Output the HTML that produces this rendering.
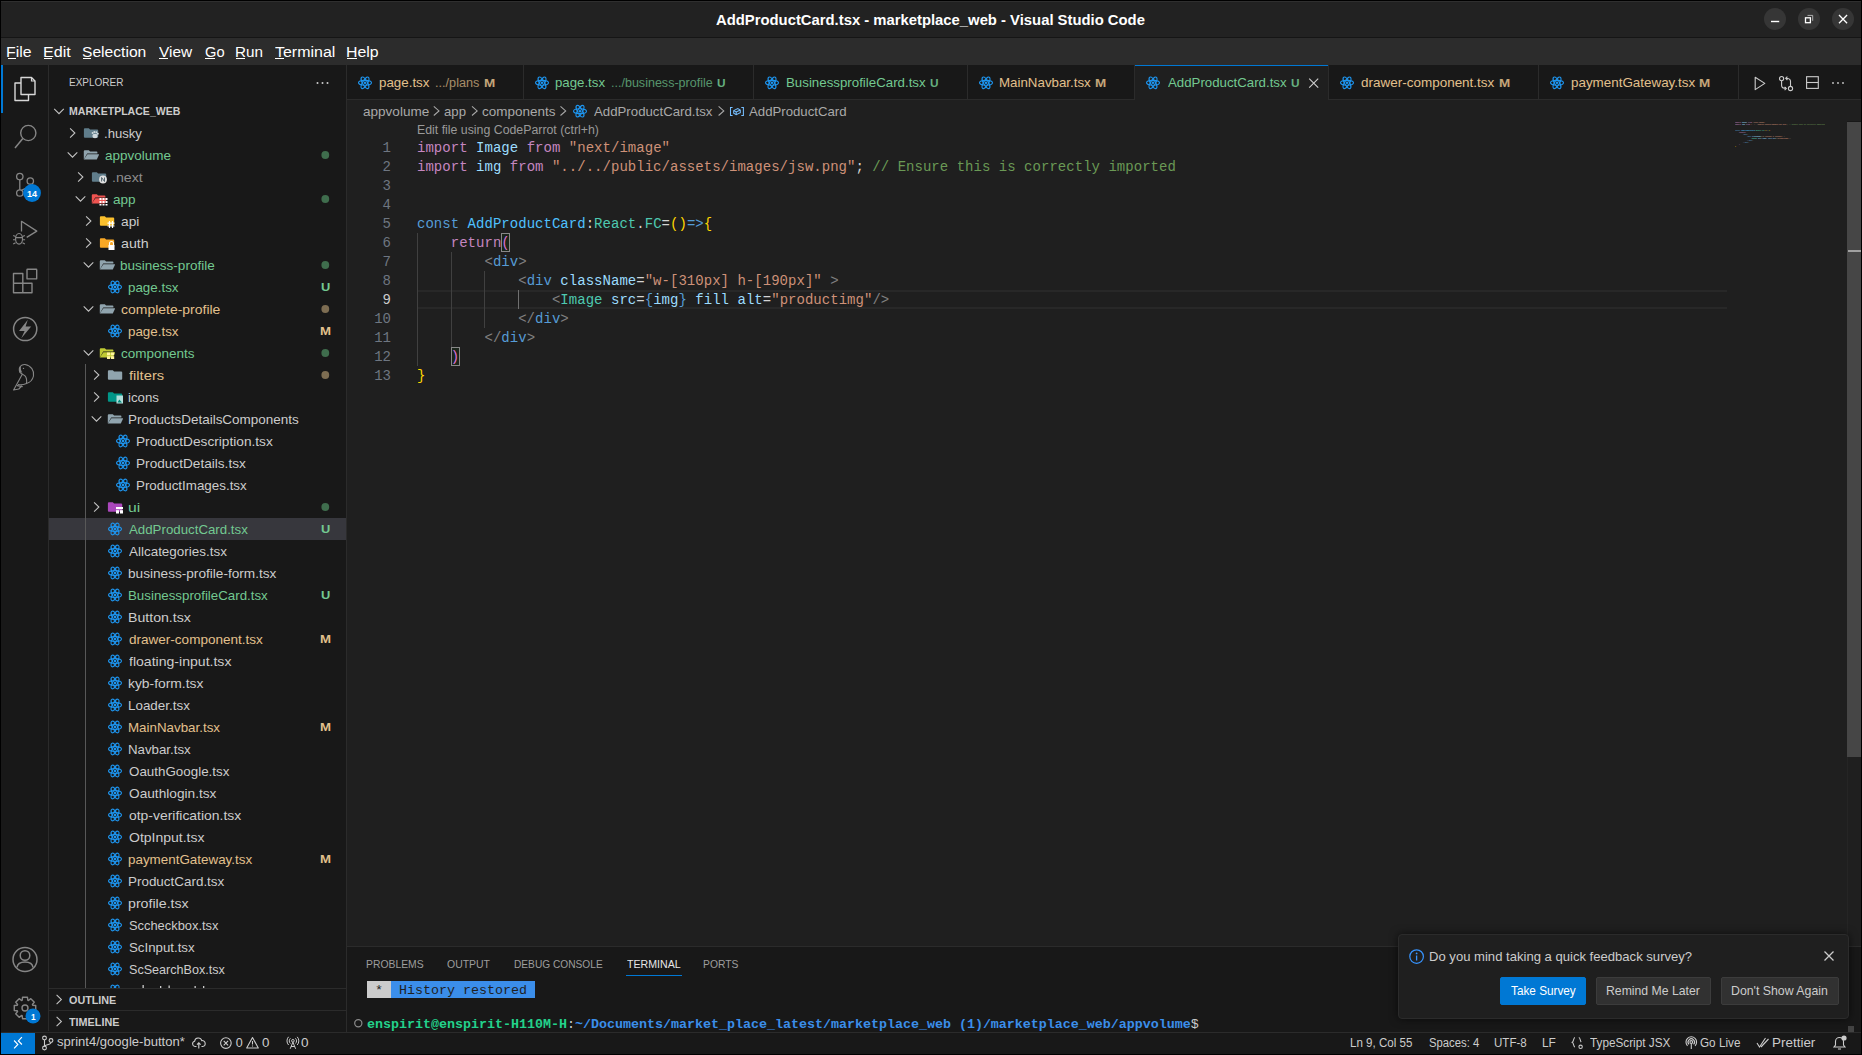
<!DOCTYPE html><html><head><meta charset='utf-8'><style>
*{margin:0;padding:0;box-sizing:border-box}
html,body{width:1862px;height:1055px;overflow:hidden;background:#181818;font-family:"Liberation Sans", sans-serif;color:#cccccc}
.a{position:absolute}
.t{position:absolute;white-space:pre;line-height:1}
svg{position:absolute;overflow:visible}
</style></head><body>
<div class='a' style='left:0;top:0;width:1862px;height:37px;background:#222222'></div>
<div class='a' style='left:0;top:37px;width:1862px;height:1px;background:#151515'></div>
<div class='t' style='left:715.92px;top:13.03px;font-size:14.5px;font-weight:700;font-family:"Liberation Sans", sans-serif;color:#ffffff;transform:scaleX(1.0224);transform-origin:0 0;'>AddProductCard.tsx - marketplace_web - Visual Studio Code</div>
<div class='a' style='left:1764.2px;top:8px;width:22px;height:22px;border-radius:11px;background:#363636'></div>
<div class='a' style='left:1798px;top:8px;width:22px;height:22px;border-radius:11px;background:#363636'></div>
<div class='a' style='left:1832px;top:8px;width:22px;height:22px;border-radius:11px;background:#363636'></div>
<svg style='left:0;top:0' width='1862' height='37'><line x1='1771' y1='21.5' x2='1779.2' y2='21.5' stroke='#fff' stroke-width='1.4'/><rect x='1805.5' y='17.8' width='4.9' height='4.9' fill='none' stroke='#fff' stroke-width='1.3'/><path d='M1807.5 15.4 H1812.7 V20.8' fill='none' stroke='#bbb' stroke-width='0.9'/><path d='M1839 15 L1847.1 23.2 M1847.1 15 L1839 23.2' stroke='#fff' stroke-width='1.3'/></svg>
<div class='a' style='left:0;top:38px;width:1862px;height:27px;background:#2c2c2c'></div>
<div class='t' style='left:6.21px;top:45.62px;font-size:13.8px;font-weight:400;font-family:"Liberation Sans", sans-serif;color:#ffffff;transform:scaleX(1.1463);transform-origin:0 0;'>File</div>
<div class='a' style='left:7.5px;top:58px;width:8px;height:1px;background:#ffffff'></div>
<div class='t' style='left:43.09px;top:45.62px;font-size:13.8px;font-weight:400;font-family:"Liberation Sans", sans-serif;color:#ffffff;transform:scaleX(1.1689);transform-origin:0 0;'>Edit</div>
<div class='a' style='left:44.4px;top:58px;width:8px;height:1px;background:#ffffff'></div>
<div class='t' style='left:82.49px;top:45.62px;font-size:13.8px;font-weight:400;font-family:"Liberation Sans", sans-serif;color:#ffffff;transform:scaleX(1.1330);transform-origin:0 0;'>Selection</div>
<div class='a' style='left:83.2px;top:58px;width:8px;height:1px;background:#ffffff'></div>
<div class='t' style='left:158.86px;top:45.62px;font-size:13.8px;font-weight:400;font-family:"Liberation Sans", sans-serif;color:#ffffff;transform:scaleX(1.1186);transform-origin:0 0;'>View</div>
<div class='a' style='left:159.0px;top:58px;width:9px;height:1px;background:#ffffff'></div>
<div class='t' style='left:204.50px;top:45.62px;font-size:13.8px;font-weight:400;font-family:"Liberation Sans", sans-serif;color:#ffffff;transform:scaleX(1.0647);transform-origin:0 0;'>Go</div>
<div class='a' style='left:205.3px;top:58px;width:10px;height:1px;background:#ffffff'></div>
<div class='t' style='left:235.06px;top:45.62px;font-size:13.8px;font-weight:400;font-family:"Liberation Sans", sans-serif;color:#ffffff;transform:scaleX(1.1054);transform-origin:0 0;'>Run</div>
<div class='a' style='left:236.3px;top:58px;width:9px;height:1px;background:#ffffff'></div>
<div class='t' style='left:274.71px;top:45.62px;font-size:13.8px;font-weight:400;font-family:"Liberation Sans", sans-serif;color:#ffffff;transform:scaleX(1.1569);transform-origin:0 0;'>Terminal</div>
<div class='a' style='left:275.0px;top:58px;width:9px;height:1px;background:#ffffff'></div>
<div class='t' style='left:346.11px;top:45.62px;font-size:13.8px;font-weight:400;font-family:"Liberation Sans", sans-serif;color:#ffffff;transform:scaleX(1.1493);transform-origin:0 0;'>Help</div>
<div class='a' style='left:347.4px;top:58px;width:10px;height:1px;background:#ffffff'></div>
<div class='a' style='left:1px;top:65px;width:47px;height:966px;background:#181818'></div>
<div class='a' style='left:48px;top:65px;width:1px;height:966px;background:#2b2b2b'></div>
<div class='a' style='left:1px;top:65px;width:2px;height:48px;background:#0078d4'></div>
<svg style='left:0;top:0' width='48' height='1031'>
<!-- explorer -->
<path d='M21 77.5 H31.5 L35 81 V94.5 H21 Z' fill='none' stroke='#d7d7d7' stroke-width='1.4' stroke-linejoin='round'/>
<path d='M31.5 77.5 V81 H35' fill='none' stroke='#d7d7d7' stroke-width='1.2'/>
<path d='M21 83 H15 V100.5 H28.5 V94.5' fill='none' stroke='#d7d7d7' stroke-width='1.4' stroke-linejoin='round'/>
<!-- search -->
<circle cx='28.3' cy='133' r='7.6' fill='none' stroke='#868686' stroke-width='1.4'/>
<line x1='22.8' y1='138.5' x2='15' y2='148' stroke='#868686' stroke-width='1.5'/>
<!-- scm -->
<circle cx='19.8' cy='176.6' r='3.2' fill='none' stroke='#868686' stroke-width='1.3'/>
<circle cx='30.3' cy='181' r='3.2' fill='none' stroke='#868686' stroke-width='1.3'/>
<circle cx='19.8' cy='193' r='3.2' fill='none' stroke='#868686' stroke-width='1.3'/>
<line x1='19.8' y1='179.8' x2='19.8' y2='189.8' stroke='#868686' stroke-width='1.3'/>
<path d='M30.3 184.2 C30 189 24 188 21.5 190.5' fill='none' stroke='#868686' stroke-width='1.3'/>
<circle cx='32.05' cy='193' r='8.9' fill='#0078d4'/>
<!-- debug -->
<path d='M21.5 231.6 V221.3 L36.8 231.1 L26.7 237.4' fill='none' stroke='#868686' stroke-width='1.3' stroke-linejoin='round'/>
<ellipse cx='19.05' cy='238.8' rx='3.5' ry='5.3' fill='none' stroke='#868686' stroke-width='1.2'/>
<path d='M15.6 237.6 H22.5 M13.2 235.4 L15.6 236.6 M24.9 235.4 L22.5 236.6 M13 239.8 H15.5 M22.6 239.8 H25.1 M13.2 244.1 L15.6 242.8 M24.9 244.1 L22.5 242.8' fill='none' stroke='#868686' stroke-width='1.1'/>
<!-- extensions -->
<path d='M13.5 273.5 H22.8 V292.7 H13.5 Z M13.5 283.2 H32 V292.7 H22.8' fill='none' stroke='#868686' stroke-width='1.4' stroke-linejoin='round'/>
<rect x='27' y='269.2' width='9.7' height='9.7' fill='none' stroke='#868686' stroke-width='1.4' rx='0.5'/>
<!-- thunder client -->
<circle cx='25.2' cy='329' r='11.6' fill='none' stroke='#868686' stroke-width='1.5'/>
<path d='M27.8 319.8 L19 331 H24.6 L21.3 338.3 L31.2 326.4 H25.6 Z' fill='#868686'/>
<!-- parrot -->
<g fill='none' stroke='#868686' stroke-width='1.1' stroke-linecap='round' stroke-linejoin='round'>
<path d='M19.8 372 C18 367 21.5 364.2 25 364.5 C31 365.3 34.5 371 33.5 376 C32.6 380 29.5 382.6 26.5 383.5 C24 384.5 21 385 18.3 384.5'/>
<path d='M19.8 372 C20.8 374 23.2 374 25 375.8 C26.8 377.8 26.9 380.5 26.5 383.5'/>
<path d='M22.3 374.3 L13.6 390 L18.8 389 L21.6 386'/>
<path d='M17.2 385.6 L22.3 386.6'/>
</g>
<path d='M19.8 372 C18.5 369 19.5 367 21 366 C20.5 368.5 21 370.5 22.3 372.8 Z' fill='#868686'/>
<circle cx='23.5' cy='368.4' r='0.7' fill='#868686'/>
<!-- accounts -->
<circle cx='25' cy='959.5' r='12' fill='none' stroke='#868686' stroke-width='1.5'/>
<circle cx='25' cy='955.5' r='4.8' fill='none' stroke='#868686' stroke-width='1.5'/>
<path d='M17 967.5 C17.5 963 21 962 25 962 C29 962 32.5 963 33 967.5' fill='none' stroke='#868686' stroke-width='1.5'/>
<!-- settings gear -->
<g transform='translate(25 1008)'><path d='M7.71 -2.80 L10.72 -2.47 L10.72 2.47 L7.71 2.80 L7.43 3.47 L9.33 5.83 L5.83 9.33 L3.47 7.43 L2.80 7.71 L2.47 10.72 L-2.47 10.72 L-2.80 7.71 L-3.47 7.43 L-5.83 9.33 L-9.33 5.83 L-7.43 3.47 L-7.71 2.80 L-10.72 2.47 L-10.72 -2.47 L-7.71 -2.80 L-7.43 -3.47 L-9.33 -5.83 L-5.83 -9.33 L-3.47 -7.43 L-2.80 -7.71 L-2.47 -10.72 L2.47 -10.72 L2.80 -7.71 L3.47 -7.43 L5.83 -9.33 L9.33 -5.83 L7.43 -3.47 Z' fill='none' stroke='#868686' stroke-width='1.4' stroke-linejoin='round'/><circle cx='0' cy='0' r='3' fill='none' stroke='#868686' stroke-width='1.4'/></g>
<circle cx='33' cy='1016' r='7.5' fill='#0078d4'/>
</svg>
<div class='t' style='left:26.71px;top:189.26px;font-size:9.5px;font-weight:700;font-family:"Liberation Sans", sans-serif;color:#ffffff;transform:scaleX(0.9519);transform-origin:0 0;'>14</div>
<div class='t' style='left:30.62px;top:1012.68px;font-size:9px;font-weight:700;font-family:"Liberation Sans", sans-serif;color:#ffffff;transform:scaleX(0.9212);transform-origin:0 0;'>1</div>
<div class='a' style='left:346px;top:65px;width:1px;height:967px;background:#2b2b2b'></div>
<div class='t' style='left:68.83px;top:76.65px;font-size:11.4px;font-weight:400;font-family:"Liberation Sans", sans-serif;color:#cccccc;transform:scaleX(0.8775);transform-origin:0 0;'>EXPLORER</div>
<svg style='left:0;top:0' width='346' height='100'><circle cx='317.5' cy='83' r='1' fill='#ccc'/><circle cx='322.5' cy='83' r='1' fill='#ccc'/><circle cx='327.5' cy='83' r='1' fill='#ccc'/></svg>
<div class='a' style='left:49px;top:518px;width:297px;height:22px;background:#37373d'></div>
<div class='a' style='left:85px;top:364px;width:1px;height:624px;background:#585858'></div>
<div class='t' style='left:104.04px;top:127.30px;font-size:13px;font-weight:400;font-family:"Liberation Sans", sans-serif;color:#cccccc;transform:scaleX(1.0097);transform-origin:0 0;'>.husky</div>
<div class='t' style='left:104.78px;top:149.30px;font-size:13px;font-weight:400;font-family:"Liberation Sans", sans-serif;color:#73c991;transform:scaleX(1.0368);transform-origin:0 0;'>appvolume</div>
<div class='t' style='left:111.94px;top:171.30px;font-size:13px;font-weight:400;font-family:"Liberation Sans", sans-serif;color:#8c8c8c;transform:scaleX(1.0902);transform-origin:0 0;'>.next</div>
<div class='t' style='left:112.78px;top:193.30px;font-size:13px;font-weight:400;font-family:"Liberation Sans", sans-serif;color:#73c991;transform:scaleX(1.0424);transform-origin:0 0;'>app</div>
<div class='t' style='left:120.77px;top:215.30px;font-size:13px;font-weight:400;font-family:"Liberation Sans", sans-serif;color:#cccccc;transform:scaleX(1.0562);transform-origin:0 0;'>api</div>
<div class='t' style='left:120.75px;top:237.30px;font-size:13px;font-weight:400;font-family:"Liberation Sans", sans-serif;color:#cccccc;transform:scaleX(1.0958);transform-origin:0 0;'>auth</div>
<div class='t' style='left:120.39px;top:259.30px;font-size:13px;font-weight:400;font-family:"Liberation Sans", sans-serif;color:#73c991;transform:scaleX(1.0399);transform-origin:0 0;'>business-profile</div>
<div class='t' style='left:128.40px;top:281.30px;font-size:13px;font-weight:400;font-family:"Liberation Sans", sans-serif;color:#73c991;transform:scaleX(1.0286);transform-origin:0 0;'>page.tsx</div>
<div class='t' style='left:321.16px;top:281.57px;font-size:11.5px;font-weight:700;font-family:"Liberation Sans", sans-serif;color:#73c991;transform:scaleX(1.1200);transform-origin:0 0;'>U</div>
<div class='t' style='left:120.76px;top:303.30px;font-size:13px;font-weight:400;font-family:"Liberation Sans", sans-serif;color:#e2c08d;transform:scaleX(1.0747);transform-origin:0 0;'>complete-profile</div>
<div class='t' style='left:128.40px;top:325.30px;font-size:13px;font-weight:400;font-family:"Liberation Sans", sans-serif;color:#e2c08d;transform:scaleX(1.0286);transform-origin:0 0;'>page.tsx</div>
<div class='t' style='left:319.64px;top:325.57px;font-size:11.5px;font-weight:700;font-family:"Liberation Sans", sans-serif;color:#e2c08d;transform:scaleX(1.1500);transform-origin:0 0;'>M</div>
<div class='t' style='left:120.78px;top:347.30px;font-size:13px;font-weight:400;font-family:"Liberation Sans", sans-serif;color:#73c991;transform:scaleX(1.0390);transform-origin:0 0;'>components</div>
<div class='t' style='left:129.16px;top:369.30px;font-size:13px;font-weight:400;font-family:"Liberation Sans", sans-serif;color:#e2c08d;transform:scaleX(1.1311);transform-origin:0 0;'>filters</div>
<div class='t' style='left:128.41px;top:391.30px;font-size:13px;font-weight:400;font-family:"Liberation Sans", sans-serif;color:#cccccc;transform:scaleX(1.0172);transform-origin:0 0;'>icons</div>
<div class='t' style='left:128.13px;top:413.30px;font-size:13px;font-weight:400;font-family:"Liberation Sans", sans-serif;color:#cccccc;transform:scaleX(1.0366);transform-origin:0 0;'>ProductsDetailsComponents</div>
<div class='t' style='left:136.12px;top:435.30px;font-size:13px;font-weight:400;font-family:"Liberation Sans", sans-serif;color:#cccccc;transform:scaleX(1.0517);transform-origin:0 0;'>ProductDescription.tsx</div>
<div class='t' style='left:136.12px;top:457.30px;font-size:13px;font-weight:400;font-family:"Liberation Sans", sans-serif;color:#cccccc;transform:scaleX(1.0483);transform-origin:0 0;'>ProductDetails.tsx</div>
<div class='t' style='left:136.14px;top:479.30px;font-size:13px;font-weight:400;font-family:"Liberation Sans", sans-serif;color:#cccccc;transform:scaleX(1.0284);transform-origin:0 0;'>ProductImages.tsx</div>
<div class='t' style='left:128.24px;top:501.30px;font-size:13px;font-weight:400;font-family:"Liberation Sans", sans-serif;color:#73c991;transform:scaleX(1.2060);transform-origin:0 0;'>ui</div>
<div class='t' style='left:129.30px;top:523.30px;font-size:13px;font-weight:400;font-family:"Liberation Sans", sans-serif;color:#73c991;transform:scaleX(1.0213);transform-origin:0 0;'>AddProductCard.tsx</div>
<div class='t' style='left:321.16px;top:523.57px;font-size:11.5px;font-weight:700;font-family:"Liberation Sans", sans-serif;color:#73c991;transform:scaleX(1.1200);transform-origin:0 0;'>U</div>
<div class='t' style='left:129.30px;top:545.30px;font-size:13px;font-weight:400;font-family:"Liberation Sans", sans-serif;color:#cccccc;transform:scaleX(1.0339);transform-origin:0 0;'>Allcategories.tsx</div>
<div class='t' style='left:128.38px;top:567.30px;font-size:13px;font-weight:400;font-family:"Liberation Sans", sans-serif;color:#cccccc;transform:scaleX(1.0477);transform-origin:0 0;'>business-profile-form.tsx</div>
<div class='t' style='left:128.15px;top:589.30px;font-size:13px;font-weight:400;font-family:"Liberation Sans", sans-serif;color:#73c991;transform:scaleX(1.0233);transform-origin:0 0;'>BusinessprofileCard.tsx</div>
<div class='t' style='left:321.16px;top:589.57px;font-size:11.5px;font-weight:700;font-family:"Liberation Sans", sans-serif;color:#73c991;transform:scaleX(1.1200);transform-origin:0 0;'>U</div>
<div class='t' style='left:128.08px;top:611.30px;font-size:13px;font-weight:400;font-family:"Liberation Sans", sans-serif;color:#cccccc;transform:scaleX(1.0867);transform-origin:0 0;'>Button.tsx</div>
<div class='t' style='left:128.78px;top:633.30px;font-size:13px;font-weight:400;font-family:"Liberation Sans", sans-serif;color:#e2c08d;transform:scaleX(1.0406);transform-origin:0 0;'>drawer-component.tsx</div>
<div class='t' style='left:319.64px;top:633.57px;font-size:11.5px;font-weight:700;font-family:"Liberation Sans", sans-serif;color:#e2c08d;transform:scaleX(1.1500);transform-origin:0 0;'>M</div>
<div class='t' style='left:129.16px;top:655.30px;font-size:13px;font-weight:400;font-family:"Liberation Sans", sans-serif;color:#cccccc;transform:scaleX(1.0819);transform-origin:0 0;'>floating-input.tsx</div>
<div class='t' style='left:128.37px;top:677.30px;font-size:13px;font-weight:400;font-family:"Liberation Sans", sans-serif;color:#cccccc;transform:scaleX(1.0652);transform-origin:0 0;'>kyb-form.tsx</div>
<div class='t' style='left:128.14px;top:699.30px;font-size:13px;font-weight:400;font-family:"Liberation Sans", sans-serif;color:#cccccc;transform:scaleX(1.0315);transform-origin:0 0;'>Loader.tsx</div>
<div class='t' style='left:128.15px;top:721.30px;font-size:13px;font-weight:400;font-family:"Liberation Sans", sans-serif;color:#e2c08d;transform:scaleX(1.0266);transform-origin:0 0;'>MainNavbar.tsx</div>
<div class='t' style='left:319.64px;top:721.57px;font-size:11.5px;font-weight:700;font-family:"Liberation Sans", sans-serif;color:#e2c08d;transform:scaleX(1.1500);transform-origin:0 0;'>M</div>
<div class='t' style='left:128.15px;top:743.30px;font-size:13px;font-weight:400;font-family:"Liberation Sans", sans-serif;color:#cccccc;transform:scaleX(1.0212);transform-origin:0 0;'>Navbar.tsx</div>
<div class='t' style='left:128.66px;top:765.30px;font-size:13px;font-weight:400;font-family:"Liberation Sans", sans-serif;color:#cccccc;transform:scaleX(1.0295);transform-origin:0 0;'>OauthGoogle.tsx</div>
<div class='t' style='left:128.64px;top:787.30px;font-size:13px;font-weight:400;font-family:"Liberation Sans", sans-serif;color:#cccccc;transform:scaleX(1.0517);transform-origin:0 0;'>Oauthlogin.tsx</div>
<div class='t' style='left:128.76px;top:809.30px;font-size:13px;font-weight:400;font-family:"Liberation Sans", sans-serif;color:#cccccc;transform:scaleX(1.0708);transform-origin:0 0;'>otp-verification.tsx</div>
<div class='t' style='left:128.63px;top:831.30px;font-size:13px;font-weight:400;font-family:"Liberation Sans", sans-serif;color:#cccccc;transform:scaleX(1.0773);transform-origin:0 0;'>OtpInput.tsx</div>
<div class='t' style='left:128.40px;top:853.30px;font-size:13px;font-weight:400;font-family:"Liberation Sans", sans-serif;color:#e2c08d;transform:scaleX(1.0312);transform-origin:0 0;'>paymentGateway.tsx</div>
<div class='t' style='left:319.64px;top:853.57px;font-size:11.5px;font-weight:700;font-family:"Liberation Sans", sans-serif;color:#e2c08d;transform:scaleX(1.1500);transform-origin:0 0;'>M</div>
<div class='t' style='left:128.14px;top:875.30px;font-size:13px;font-weight:400;font-family:"Liberation Sans", sans-serif;color:#cccccc;transform:scaleX(1.0329);transform-origin:0 0;'>ProductCard.tsx</div>
<div class='t' style='left:128.35px;top:897.30px;font-size:13px;font-weight:400;font-family:"Liberation Sans", sans-serif;color:#cccccc;transform:scaleX(1.0911);transform-origin:0 0;'>profile.tsx</div>
<div class='t' style='left:128.68px;top:919.30px;font-size:13px;font-weight:400;font-family:"Liberation Sans", sans-serif;color:#cccccc;transform:scaleX(0.9899);transform-origin:0 0;'>Sccheckbox.tsx</div>
<div class='t' style='left:128.66px;top:941.30px;font-size:13px;font-weight:400;font-family:"Liberation Sans", sans-serif;color:#cccccc;transform:scaleX(1.0205);transform-origin:0 0;'>ScInput.tsx</div>
<div class='t' style='left:128.69px;top:963.30px;font-size:13px;font-weight:400;font-family:"Liberation Sans", sans-serif;color:#cccccc;transform:scaleX(0.9690);transform-origin:0 0;'>ScSearchBox.tsx</div>
<svg style='left:0;top:0' width='346' height='1055'><path d='M54.2 108.9 L59 113.7 L63.8 108.9' fill='none' stroke='#c5c5c5' stroke-width='1.05'/><path d='M70.1 128.3 L74.9 133 L70.1 137.7' fill='none' stroke='#c5c5c5' stroke-width='1.05'/><g transform='translate(84 127)'><path d='M-0.1 2.2 Q-0.1 1.2 0.9 1.2 H4.8 L6.1 2.4 H13.2 Q14.2 2.4 14.2 3.4 V9.8 Q14.2 10.8 13.2 10.8 H0.9 Q-0.1 10.8 -0.1 9.8 Z' fill='#607d8b'/><g fill='#cfd8dc'><ellipse cx='11' cy='9' rx='2.6' ry='2.2'/><circle cx='8.6' cy='6' r='1'/><circle cx='10.4' cy='5' r='1'/><circle cx='12.4' cy='5.2' r='1'/><circle cx='13.8' cy='6.8' r='1'/></g></g><path d='M67.7 152.4 L72.5 157.2 L77.3 152.4' fill='none' stroke='#c5c5c5' stroke-width='1.05'/><g transform='translate(84 149)'><path d='M-0.2 2.2 Q-0.2 1.2 0.8 1.2 H4.8 L6.1 2.4 H12.6 Q13.4 2.4 13.4 3.2 V4.4 H3.2 L-0.2 10.5 Z' fill='#90a4ae'/><path d='M3.4 5.2 H14.6 Q15.2 5.2 15 5.8 L12.8 10.5 H-0.2 Z' fill='#90a4ae'/></g><circle cx='325.3' cy='155' r='3.9' fill='#3f6d4d'/><path d='M78.1 172.3 L82.9 177 L78.1 181.7' fill='none' stroke='#c5c5c5' stroke-width='1.05'/><g transform='translate(92 171)'><path d='M-0.1 2.2 Q-0.1 1.2 0.9 1.2 H4.8 L6.1 2.4 H13.2 Q14.2 2.4 14.2 3.4 V9.8 Q14.2 10.8 13.2 10.8 H0.9 Q-0.1 10.8 -0.1 9.8 Z' fill='#607d8b'/><circle cx='11' cy='8.5' r='3.9' fill='#e0e0e0'/><path d='M9.6 10.5 V6.5 L12.5 10.5 V6.5' stroke='#455a64' stroke-width='0.9' fill='none'/></g><path d='M75.7 196.4 L80.5 201.2 L85.3 196.4' fill='none' stroke='#c5c5c5' stroke-width='1.05'/><g transform='translate(92 193)'><path d='M-0.2 2.2 Q-0.2 1.2 0.8 1.2 H4.8 L6.1 2.4 H12.6 Q13.4 2.4 13.4 3.2 V4.4 H3.2 L-0.2 10.5 Z' fill='#ef5350'/><path d='M3.4 5.2 H14.6 Q15.2 5.2 15 5.8 L12.8 10.5 H-0.2 Z' fill='#ef5350'/><g fill='#fff'><rect x='7.5' y='5' width='2' height='2'/><rect x='10.5' y='5' width='2' height='2'/><rect x='13.5' y='5' width='2' height='2'/><rect x='7.5' y='8' width='2' height='2'/><rect x='10.5' y='8' width='2' height='2'/><rect x='13.5' y='8' width='2' height='2'/><rect x='7.5' y='11' width='2' height='1.5'/><rect x='10.5' y='11' width='2' height='1.5'/><rect x='13.5' y='11' width='2' height='1.5'/></g></g><circle cx='325.3' cy='199' r='3.9' fill='#3f6d4d'/><path d='M86.1 216.3 L90.9 221 L86.1 225.7' fill='none' stroke='#c5c5c5' stroke-width='1.05'/><g transform='translate(100 215)'><path d='M-0.1 2.2 Q-0.1 1.2 0.9 1.2 H4.8 L6.1 2.4 H13.2 Q14.2 2.4 14.2 3.4 V9.8 Q14.2 10.8 13.2 10.8 H0.9 Q-0.1 10.8 -0.1 9.8 Z' fill='#fbc02d'/><path d='M9.5 6 V13 M12.5 6 V13 M7.5 8.2 H14.5 M7.5 11 H14.5' stroke='#fff' stroke-width='1.2'/></g><path d='M86.1 238.3 L90.9 243 L86.1 247.7' fill='none' stroke='#c5c5c5' stroke-width='1.05'/><g transform='translate(100 237)'><path d='M-0.1 2.2 Q-0.1 1.2 0.9 1.2 H4.8 L6.1 2.4 H13.2 Q14.2 2.4 14.2 3.4 V9.8 Q14.2 10.8 13.2 10.8 H0.9 Q-0.1 10.8 -0.1 9.8 Z' fill='#f9a825'/><rect x='8.5' y='8' width='6' height='5' fill='#fff'/><path d='M9.5 8 V6.5 A2 2 0 0 1 13.5 6.5 V8' fill='none' stroke='#fff' stroke-width='1.1'/></g><path d='M83.7 262.4 L88.5 267.2 L93.3 262.4' fill='none' stroke='#c5c5c5' stroke-width='1.05'/><g transform='translate(100 259)'><path d='M-0.2 2.2 Q-0.2 1.2 0.8 1.2 H4.8 L6.1 2.4 H12.6 Q13.4 2.4 13.4 3.2 V4.4 H3.2 L-0.2 10.5 Z' fill='#90a4ae'/><path d='M3.4 5.2 H14.6 Q15.2 5.2 15 5.8 L12.8 10.5 H-0.2 Z' fill='#90a4ae'/></g><circle cx='325.3' cy='265' r='3.9' fill='#3f6d4d'/><g transform='translate(115 287)'><ellipse rx='6.5' ry='2.4' fill='none' stroke='#1e95ef' stroke-width='1.1'/><ellipse rx='6.5' ry='2.4' fill='none' stroke='#1e95ef' stroke-width='1.1' transform='rotate(60)'/><ellipse rx='6.5' ry='2.4' fill='none' stroke='#1e95ef' stroke-width='1.1' transform='rotate(-60)'/><circle r='1.3' fill='#1e95ef'/></g><path d='M83.7 306.4 L88.5 311.2 L93.3 306.4' fill='none' stroke='#c5c5c5' stroke-width='1.05'/><g transform='translate(100 303)'><path d='M-0.2 2.2 Q-0.2 1.2 0.8 1.2 H4.8 L6.1 2.4 H12.6 Q13.4 2.4 13.4 3.2 V4.4 H3.2 L-0.2 10.5 Z' fill='#90a4ae'/><path d='M3.4 5.2 H14.6 Q15.2 5.2 15 5.8 L12.8 10.5 H-0.2 Z' fill='#90a4ae'/></g><circle cx='325.3' cy='309' r='3.9' fill='#7d6d52'/><g transform='translate(115 331)'><ellipse rx='6.5' ry='2.4' fill='none' stroke='#1e95ef' stroke-width='1.1'/><ellipse rx='6.5' ry='2.4' fill='none' stroke='#1e95ef' stroke-width='1.1' transform='rotate(60)'/><ellipse rx='6.5' ry='2.4' fill='none' stroke='#1e95ef' stroke-width='1.1' transform='rotate(-60)'/><circle r='1.3' fill='#1e95ef'/></g><path d='M83.7 350.4 L88.5 355.2 L93.3 350.4' fill='none' stroke='#c5c5c5' stroke-width='1.05'/><g transform='translate(100 347)'><path d='M-0.2 2.2 Q-0.2 1.2 0.8 1.2 H4.8 L6.1 2.4 H12.6 Q13.4 2.4 13.4 3.2 V4.4 H3.2 L-0.2 10.5 Z' fill='#c0ca33'/><path d='M3.4 5.2 H14.6 Q15.2 5.2 15 5.8 L12.8 10.5 H-0.2 Z' fill='#c0ca33'/><g fill='#fff59d'><rect x='7' y='5.5' width='3.2' height='2.8'/><rect x='11' y='5.5' width='3.2' height='2.8'/><rect x='7' y='9.2' width='3.2' height='2.8'/><rect x='11' y='9.2' width='3.2' height='2.8'/></g></g><circle cx='325.3' cy='353' r='3.9' fill='#3f6d4d'/><path d='M94.1 370.3 L98.9 375 L94.1 379.7' fill='none' stroke='#c5c5c5' stroke-width='1.05'/><g transform='translate(108 369)'><path d='M-0.1 2.2 Q-0.1 1.2 0.9 1.2 H4.8 L6.1 2.4 H13.2 Q14.2 2.4 14.2 3.4 V9.8 Q14.2 10.8 13.2 10.8 H0.9 Q-0.1 10.8 -0.1 9.8 Z' fill='#90a4ae'/></g><circle cx='325.3' cy='375' r='3.9' fill='#7d6d52'/><path d='M94.1 392.3 L98.9 397 L94.1 401.7' fill='none' stroke='#c5c5c5' stroke-width='1.05'/><g transform='translate(108 391)'><path d='M-0.1 2.2 Q-0.1 1.2 0.9 1.2 H4.8 L6.1 2.4 H13.2 Q14.2 2.4 14.2 3.4 V9.8 Q14.2 10.8 13.2 10.8 H0.9 Q-0.1 10.8 -0.1 9.8 Z' fill='#009688'/><rect x='8.5' y='4.5' width='6.5' height='8' fill='#b2dfdb'/><path d='M9.5 11.5 L11.3 8.5 L14 11.5 Z' fill='#00897b'/></g><path d='M91.7 416.4 L96.5 421.2 L101.3 416.4' fill='none' stroke='#c5c5c5' stroke-width='1.05'/><g transform='translate(108 413)'><path d='M-0.2 2.2 Q-0.2 1.2 0.8 1.2 H4.8 L6.1 2.4 H12.6 Q13.4 2.4 13.4 3.2 V4.4 H3.2 L-0.2 10.5 Z' fill='#90a4ae'/><path d='M3.4 5.2 H14.6 Q15.2 5.2 15 5.8 L12.8 10.5 H-0.2 Z' fill='#90a4ae'/></g><g transform='translate(123 441)'><ellipse rx='6.5' ry='2.4' fill='none' stroke='#1e95ef' stroke-width='1.1'/><ellipse rx='6.5' ry='2.4' fill='none' stroke='#1e95ef' stroke-width='1.1' transform='rotate(60)'/><ellipse rx='6.5' ry='2.4' fill='none' stroke='#1e95ef' stroke-width='1.1' transform='rotate(-60)'/><circle r='1.3' fill='#1e95ef'/></g><g transform='translate(123 463)'><ellipse rx='6.5' ry='2.4' fill='none' stroke='#1e95ef' stroke-width='1.1'/><ellipse rx='6.5' ry='2.4' fill='none' stroke='#1e95ef' stroke-width='1.1' transform='rotate(60)'/><ellipse rx='6.5' ry='2.4' fill='none' stroke='#1e95ef' stroke-width='1.1' transform='rotate(-60)'/><circle r='1.3' fill='#1e95ef'/></g><g transform='translate(123 485)'><ellipse rx='6.5' ry='2.4' fill='none' stroke='#1e95ef' stroke-width='1.1'/><ellipse rx='6.5' ry='2.4' fill='none' stroke='#1e95ef' stroke-width='1.1' transform='rotate(60)'/><ellipse rx='6.5' ry='2.4' fill='none' stroke='#1e95ef' stroke-width='1.1' transform='rotate(-60)'/><circle r='1.3' fill='#1e95ef'/></g><path d='M94.1 502.3 L98.9 507 L94.1 511.7' fill='none' stroke='#c5c5c5' stroke-width='1.05'/><g transform='translate(108 501)'><path d='M-0.1 2.2 Q-0.1 1.2 0.9 1.2 H4.8 L6.1 2.4 H13.2 Q14.2 2.4 14.2 3.4 V9.8 Q14.2 10.8 13.2 10.8 H0.9 Q-0.1 10.8 -0.1 9.8 Z' fill='#ab47bc'/><rect x='8' y='6' width='7' height='2.2' fill='#fff'/><rect x='8' y='9.2' width='3' height='3.3' fill='#fff'/><rect x='12' y='9.2' width='3' height='3.3' fill='#fff'/></g><circle cx='325.3' cy='507' r='3.9' fill='#3f6d4d'/><g transform='translate(115 529)'><ellipse rx='6.5' ry='2.4' fill='none' stroke='#1e95ef' stroke-width='1.1'/><ellipse rx='6.5' ry='2.4' fill='none' stroke='#1e95ef' stroke-width='1.1' transform='rotate(60)'/><ellipse rx='6.5' ry='2.4' fill='none' stroke='#1e95ef' stroke-width='1.1' transform='rotate(-60)'/><circle r='1.3' fill='#1e95ef'/></g><g transform='translate(115 551)'><ellipse rx='6.5' ry='2.4' fill='none' stroke='#1e95ef' stroke-width='1.1'/><ellipse rx='6.5' ry='2.4' fill='none' stroke='#1e95ef' stroke-width='1.1' transform='rotate(60)'/><ellipse rx='6.5' ry='2.4' fill='none' stroke='#1e95ef' stroke-width='1.1' transform='rotate(-60)'/><circle r='1.3' fill='#1e95ef'/></g><g transform='translate(115 573)'><ellipse rx='6.5' ry='2.4' fill='none' stroke='#1e95ef' stroke-width='1.1'/><ellipse rx='6.5' ry='2.4' fill='none' stroke='#1e95ef' stroke-width='1.1' transform='rotate(60)'/><ellipse rx='6.5' ry='2.4' fill='none' stroke='#1e95ef' stroke-width='1.1' transform='rotate(-60)'/><circle r='1.3' fill='#1e95ef'/></g><g transform='translate(115 595)'><ellipse rx='6.5' ry='2.4' fill='none' stroke='#1e95ef' stroke-width='1.1'/><ellipse rx='6.5' ry='2.4' fill='none' stroke='#1e95ef' stroke-width='1.1' transform='rotate(60)'/><ellipse rx='6.5' ry='2.4' fill='none' stroke='#1e95ef' stroke-width='1.1' transform='rotate(-60)'/><circle r='1.3' fill='#1e95ef'/></g><g transform='translate(115 617)'><ellipse rx='6.5' ry='2.4' fill='none' stroke='#1e95ef' stroke-width='1.1'/><ellipse rx='6.5' ry='2.4' fill='none' stroke='#1e95ef' stroke-width='1.1' transform='rotate(60)'/><ellipse rx='6.5' ry='2.4' fill='none' stroke='#1e95ef' stroke-width='1.1' transform='rotate(-60)'/><circle r='1.3' fill='#1e95ef'/></g><g transform='translate(115 639)'><ellipse rx='6.5' ry='2.4' fill='none' stroke='#1e95ef' stroke-width='1.1'/><ellipse rx='6.5' ry='2.4' fill='none' stroke='#1e95ef' stroke-width='1.1' transform='rotate(60)'/><ellipse rx='6.5' ry='2.4' fill='none' stroke='#1e95ef' stroke-width='1.1' transform='rotate(-60)'/><circle r='1.3' fill='#1e95ef'/></g><g transform='translate(115 661)'><ellipse rx='6.5' ry='2.4' fill='none' stroke='#1e95ef' stroke-width='1.1'/><ellipse rx='6.5' ry='2.4' fill='none' stroke='#1e95ef' stroke-width='1.1' transform='rotate(60)'/><ellipse rx='6.5' ry='2.4' fill='none' stroke='#1e95ef' stroke-width='1.1' transform='rotate(-60)'/><circle r='1.3' fill='#1e95ef'/></g><g transform='translate(115 683)'><ellipse rx='6.5' ry='2.4' fill='none' stroke='#1e95ef' stroke-width='1.1'/><ellipse rx='6.5' ry='2.4' fill='none' stroke='#1e95ef' stroke-width='1.1' transform='rotate(60)'/><ellipse rx='6.5' ry='2.4' fill='none' stroke='#1e95ef' stroke-width='1.1' transform='rotate(-60)'/><circle r='1.3' fill='#1e95ef'/></g><g transform='translate(115 705)'><ellipse rx='6.5' ry='2.4' fill='none' stroke='#1e95ef' stroke-width='1.1'/><ellipse rx='6.5' ry='2.4' fill='none' stroke='#1e95ef' stroke-width='1.1' transform='rotate(60)'/><ellipse rx='6.5' ry='2.4' fill='none' stroke='#1e95ef' stroke-width='1.1' transform='rotate(-60)'/><circle r='1.3' fill='#1e95ef'/></g><g transform='translate(115 727)'><ellipse rx='6.5' ry='2.4' fill='none' stroke='#1e95ef' stroke-width='1.1'/><ellipse rx='6.5' ry='2.4' fill='none' stroke='#1e95ef' stroke-width='1.1' transform='rotate(60)'/><ellipse rx='6.5' ry='2.4' fill='none' stroke='#1e95ef' stroke-width='1.1' transform='rotate(-60)'/><circle r='1.3' fill='#1e95ef'/></g><g transform='translate(115 749)'><ellipse rx='6.5' ry='2.4' fill='none' stroke='#1e95ef' stroke-width='1.1'/><ellipse rx='6.5' ry='2.4' fill='none' stroke='#1e95ef' stroke-width='1.1' transform='rotate(60)'/><ellipse rx='6.5' ry='2.4' fill='none' stroke='#1e95ef' stroke-width='1.1' transform='rotate(-60)'/><circle r='1.3' fill='#1e95ef'/></g><g transform='translate(115 771)'><ellipse rx='6.5' ry='2.4' fill='none' stroke='#1e95ef' stroke-width='1.1'/><ellipse rx='6.5' ry='2.4' fill='none' stroke='#1e95ef' stroke-width='1.1' transform='rotate(60)'/><ellipse rx='6.5' ry='2.4' fill='none' stroke='#1e95ef' stroke-width='1.1' transform='rotate(-60)'/><circle r='1.3' fill='#1e95ef'/></g><g transform='translate(115 793)'><ellipse rx='6.5' ry='2.4' fill='none' stroke='#1e95ef' stroke-width='1.1'/><ellipse rx='6.5' ry='2.4' fill='none' stroke='#1e95ef' stroke-width='1.1' transform='rotate(60)'/><ellipse rx='6.5' ry='2.4' fill='none' stroke='#1e95ef' stroke-width='1.1' transform='rotate(-60)'/><circle r='1.3' fill='#1e95ef'/></g><g transform='translate(115 815)'><ellipse rx='6.5' ry='2.4' fill='none' stroke='#1e95ef' stroke-width='1.1'/><ellipse rx='6.5' ry='2.4' fill='none' stroke='#1e95ef' stroke-width='1.1' transform='rotate(60)'/><ellipse rx='6.5' ry='2.4' fill='none' stroke='#1e95ef' stroke-width='1.1' transform='rotate(-60)'/><circle r='1.3' fill='#1e95ef'/></g><g transform='translate(115 837)'><ellipse rx='6.5' ry='2.4' fill='none' stroke='#1e95ef' stroke-width='1.1'/><ellipse rx='6.5' ry='2.4' fill='none' stroke='#1e95ef' stroke-width='1.1' transform='rotate(60)'/><ellipse rx='6.5' ry='2.4' fill='none' stroke='#1e95ef' stroke-width='1.1' transform='rotate(-60)'/><circle r='1.3' fill='#1e95ef'/></g><g transform='translate(115 859)'><ellipse rx='6.5' ry='2.4' fill='none' stroke='#1e95ef' stroke-width='1.1'/><ellipse rx='6.5' ry='2.4' fill='none' stroke='#1e95ef' stroke-width='1.1' transform='rotate(60)'/><ellipse rx='6.5' ry='2.4' fill='none' stroke='#1e95ef' stroke-width='1.1' transform='rotate(-60)'/><circle r='1.3' fill='#1e95ef'/></g><g transform='translate(115 881)'><ellipse rx='6.5' ry='2.4' fill='none' stroke='#1e95ef' stroke-width='1.1'/><ellipse rx='6.5' ry='2.4' fill='none' stroke='#1e95ef' stroke-width='1.1' transform='rotate(60)'/><ellipse rx='6.5' ry='2.4' fill='none' stroke='#1e95ef' stroke-width='1.1' transform='rotate(-60)'/><circle r='1.3' fill='#1e95ef'/></g><g transform='translate(115 903)'><ellipse rx='6.5' ry='2.4' fill='none' stroke='#1e95ef' stroke-width='1.1'/><ellipse rx='6.5' ry='2.4' fill='none' stroke='#1e95ef' stroke-width='1.1' transform='rotate(60)'/><ellipse rx='6.5' ry='2.4' fill='none' stroke='#1e95ef' stroke-width='1.1' transform='rotate(-60)'/><circle r='1.3' fill='#1e95ef'/></g><g transform='translate(115 925)'><ellipse rx='6.5' ry='2.4' fill='none' stroke='#1e95ef' stroke-width='1.1'/><ellipse rx='6.5' ry='2.4' fill='none' stroke='#1e95ef' stroke-width='1.1' transform='rotate(60)'/><ellipse rx='6.5' ry='2.4' fill='none' stroke='#1e95ef' stroke-width='1.1' transform='rotate(-60)'/><circle r='1.3' fill='#1e95ef'/></g><g transform='translate(115 947)'><ellipse rx='6.5' ry='2.4' fill='none' stroke='#1e95ef' stroke-width='1.1'/><ellipse rx='6.5' ry='2.4' fill='none' stroke='#1e95ef' stroke-width='1.1' transform='rotate(60)'/><ellipse rx='6.5' ry='2.4' fill='none' stroke='#1e95ef' stroke-width='1.1' transform='rotate(-60)'/><circle r='1.3' fill='#1e95ef'/></g><g transform='translate(115 969)'><ellipse rx='6.5' ry='2.4' fill='none' stroke='#1e95ef' stroke-width='1.1'/><ellipse rx='6.5' ry='2.4' fill='none' stroke='#1e95ef' stroke-width='1.1' transform='rotate(60)'/><ellipse rx='6.5' ry='2.4' fill='none' stroke='#1e95ef' stroke-width='1.1' transform='rotate(-60)'/><circle r='1.3' fill='#1e95ef'/></g></svg>
<div class='a' style='left:0;top:0;width:1862px;height:1055px;clip-path:inset(980px 1516px 67px 49px)'>
<svg style='left:0;top:0' width='346' height='1055'><g transform='translate(115 991)'><ellipse rx='6.5' ry='2.4' fill='none' stroke='#1e95ef' stroke-width='1.1'/><ellipse rx='6.5' ry='2.4' fill='none' stroke='#1e95ef' stroke-width='1.1' transform='rotate(60)'/><ellipse rx='6.5' ry='2.4' fill='none' stroke='#1e95ef' stroke-width='1.1' transform='rotate(-60)'/><circle r='1.3' fill='#1e95ef'/></g><g fill='#cccccc'><rect x='142.5' y='985' width='1.3' height='3'/><rect x='160' y='986' width='1.3' height='2'/><rect x='168.5' y='985.5' width='1.3' height='2.5'/><rect x='194.5' y='986' width='1.3' height='2'/><rect x='203' y='986' width='1.3' height='2'/></g></svg>
</div>
<div class='t' style='left:68.91px;top:105.57px;font-size:11.5px;font-weight:700;font-family:"Liberation Sans", sans-serif;color:#cccccc;transform:scaleX(0.9174);transform-origin:0 0;'>MARKETPLACE_WEB</div>
<div class='a' style='left:49px;top:988px;width:297px;height:1px;background:#2b2b2b'></div>
<div class='a' style='left:49px;top:1010px;width:297px;height:1px;background:#2b2b2b'></div>
<div class='t' style='left:69.13px;top:994.57px;font-size:11.5px;font-weight:700;font-family:"Liberation Sans", sans-serif;color:#cccccc;transform:scaleX(0.9374);transform-origin:0 0;'>OUTLINE</div>
<div class='t' style='left:69.48px;top:1016.57px;font-size:11.5px;font-weight:700;font-family:"Liberation Sans", sans-serif;color:#cccccc;transform:scaleX(0.9393);transform-origin:0 0;'>TIMELINE</div>
<svg style='left:0;top:0' width='346' height='1055'><path d='M56.6 994.8 L61.4 999.5 L56.6 1004.2' fill='none' stroke='#c5c5c5' stroke-width='1.05'/><path d='M56.6 1016.8 L61.4 1021.5 L56.6 1026.2' fill='none' stroke='#c5c5c5' stroke-width='1.05'/></svg>
<div class='a' style='left:347px;top:65px;width:1515px;height:35px;background:#181818'></div>
<div class='a' style='left:347px;top:99px;width:1515px;height:1px;background:#2b2b2b'></div>
<div class='a' style='left:347px;top:100px;width:1515px;height:846px;background:#1f1f1f'></div>
<div class='a' style='left:523px;top:65px;width:1px;height:35px;background:#2b2b2b'></div>
<div class='t' style='left:378.50px;top:76.30px;font-size:13px;font-weight:400;font-family:"Liberation Sans", sans-serif;color:#e2c08d;transform:scaleX(1.0265);transform-origin:0 0;'>page.tsx</div>
<div class='t' style='left:434.91px;top:77.14px;font-size:12px;font-weight:400;font-family:"Liberation Sans", sans-serif;color:#e2c08d;transform:scaleX(1.0568);transform-origin:0 0;opacity:.7;'>.../plans</div>
<div class='t' style='left:483.94px;top:78.41px;font-size:10.5px;font-weight:700;font-family:"Liberation Sans", sans-serif;color:#e2c08d;transform:scaleX(1.2828);transform-origin:0 0;opacity:.85;'>M</div>
<div class='a' style='left:753px;top:65px;width:1px;height:35px;background:#2b2b2b'></div>
<div class='t' style='left:555.11px;top:76.30px;font-size:13px;font-weight:400;font-family:"Liberation Sans", sans-serif;color:#73c991;transform:scaleX(1.0182);transform-origin:0 0;'>page.tsx</div>
<div class='t' style='left:610.83px;top:77.14px;font-size:12px;font-weight:400;font-family:"Liberation Sans", sans-serif;color:#73c991;transform:scaleX(1.0444);transform-origin:0 0;opacity:.7;'>.../business-profile</div>
<div class='t' style='left:716.99px;top:78.41px;font-size:10.5px;font-weight:700;font-family:"Liberation Sans", sans-serif;color:#73c991;transform:scaleX(1.1294);transform-origin:0 0;opacity:.85;'>U</div>
<div class='a' style='left:967px;top:65px;width:1px;height:35px;background:#2b2b2b'></div>
<div class='t' style='left:785.75px;top:76.30px;font-size:13px;font-weight:400;font-family:"Liberation Sans", sans-serif;color:#73c991;transform:scaleX(1.0226);transform-origin:0 0;'>BusinessprofileCard.tsx</div>
<div class='t' style='left:930.09px;top:78.41px;font-size:10.5px;font-weight:700;font-family:"Liberation Sans", sans-serif;color:#73c991;transform:scaleX(1.1294);transform-origin:0 0;opacity:.85;'>U</div>
<div class='a' style='left:1134px;top:65px;width:1px;height:35px;background:#2b2b2b'></div>
<div class='t' style='left:999.25px;top:76.30px;font-size:13px;font-weight:400;font-family:"Liberation Sans", sans-serif;color:#e2c08d;transform:scaleX(1.0244);transform-origin:0 0;'>MainNavbar.tsx</div>
<div class='t' style='left:1095.44px;top:78.41px;font-size:10.5px;font-weight:700;font-family:"Liberation Sans", sans-serif;color:#e2c08d;transform:scaleX(1.2828);transform-origin:0 0;opacity:.85;'>M</div>
<div class='a' style='left:1135px;top:65px;width:193px;height:35px;background:#1f1f1f'></div>
<div class='a' style='left:1135px;top:65px;width:193px;height:1px;background:#0078d4'></div>
<div class='a' style='left:1328px;top:65px;width:1px;height:35px;background:#2b2b2b'></div>
<div class='t' style='left:1167.80px;top:76.30px;font-size:13px;font-weight:400;font-family:"Liberation Sans", sans-serif;color:#73c991;transform:scaleX(1.0196);transform-origin:0 0;'>AddProductCard.tsx</div>
<div class='t' style='left:1290.69px;top:78.41px;font-size:10.5px;font-weight:700;font-family:"Liberation Sans", sans-serif;color:#73c991;transform:scaleX(1.1294);transform-origin:0 0;opacity:.85;'>U</div>
<div class='a' style='left:1538px;top:65px;width:1px;height:35px;background:#2b2b2b'></div>
<div class='t' style='left:1360.78px;top:76.30px;font-size:13px;font-weight:400;font-family:"Liberation Sans", sans-serif;color:#e2c08d;transform:scaleX(1.0367);transform-origin:0 0;'>drawer-component.tsx</div>
<div class='t' style='left:1498.64px;top:78.41px;font-size:10.5px;font-weight:700;font-family:"Liberation Sans", sans-serif;color:#e2c08d;transform:scaleX(1.2828);transform-origin:0 0;opacity:.85;'>M</div>
<div class='a' style='left:1738px;top:65px;width:1px;height:35px;background:#2b2b2b'></div>
<div class='t' style='left:1570.60px;top:76.30px;font-size:13px;font-weight:400;font-family:"Liberation Sans", sans-serif;color:#e2c08d;transform:scaleX(1.0312);transform-origin:0 0;'>paymentGateway.tsx</div>
<div class='t' style='left:1699.04px;top:78.41px;font-size:10.5px;font-weight:700;font-family:"Liberation Sans", sans-serif;color:#e2c08d;transform:scaleX(1.2828);transform-origin:0 0;opacity:.85;'>M</div>
<svg style='left:0;top:0' width='1862' height='100'><g transform='translate(365 82.8)'><ellipse rx='6.5' ry='2.4' fill='none' stroke='#1e95ef' stroke-width='1.1'/><ellipse rx='6.5' ry='2.4' fill='none' stroke='#1e95ef' stroke-width='1.1' transform='rotate(60)'/><ellipse rx='6.5' ry='2.4' fill='none' stroke='#1e95ef' stroke-width='1.1' transform='rotate(-60)'/><circle r='1.3' fill='#1e95ef'/></g><g transform='translate(542 82.8)'><ellipse rx='6.5' ry='2.4' fill='none' stroke='#1e95ef' stroke-width='1.1'/><ellipse rx='6.5' ry='2.4' fill='none' stroke='#1e95ef' stroke-width='1.1' transform='rotate(60)'/><ellipse rx='6.5' ry='2.4' fill='none' stroke='#1e95ef' stroke-width='1.1' transform='rotate(-60)'/><circle r='1.3' fill='#1e95ef'/></g><g transform='translate(772 82.8)'><ellipse rx='6.5' ry='2.4' fill='none' stroke='#1e95ef' stroke-width='1.1'/><ellipse rx='6.5' ry='2.4' fill='none' stroke='#1e95ef' stroke-width='1.1' transform='rotate(60)'/><ellipse rx='6.5' ry='2.4' fill='none' stroke='#1e95ef' stroke-width='1.1' transform='rotate(-60)'/><circle r='1.3' fill='#1e95ef'/></g><g transform='translate(986 82.8)'><ellipse rx='6.5' ry='2.4' fill='none' stroke='#1e95ef' stroke-width='1.1'/><ellipse rx='6.5' ry='2.4' fill='none' stroke='#1e95ef' stroke-width='1.1' transform='rotate(60)'/><ellipse rx='6.5' ry='2.4' fill='none' stroke='#1e95ef' stroke-width='1.1' transform='rotate(-60)'/><circle r='1.3' fill='#1e95ef'/></g><path d='M1309.2 78.6 L1318.2 87.6 M1318.2 78.6 L1309.2 87.6' stroke='#cccccc' stroke-width='1.15'/><g transform='translate(1153 82.8)'><ellipse rx='6.5' ry='2.4' fill='none' stroke='#1e95ef' stroke-width='1.1'/><ellipse rx='6.5' ry='2.4' fill='none' stroke='#1e95ef' stroke-width='1.1' transform='rotate(60)'/><ellipse rx='6.5' ry='2.4' fill='none' stroke='#1e95ef' stroke-width='1.1' transform='rotate(-60)'/><circle r='1.3' fill='#1e95ef'/></g><g transform='translate(1347 82.8)'><ellipse rx='6.5' ry='2.4' fill='none' stroke='#1e95ef' stroke-width='1.1'/><ellipse rx='6.5' ry='2.4' fill='none' stroke='#1e95ef' stroke-width='1.1' transform='rotate(60)'/><ellipse rx='6.5' ry='2.4' fill='none' stroke='#1e95ef' stroke-width='1.1' transform='rotate(-60)'/><circle r='1.3' fill='#1e95ef'/></g><g transform='translate(1557 82.8)'><ellipse rx='6.5' ry='2.4' fill='none' stroke='#1e95ef' stroke-width='1.1'/><ellipse rx='6.5' ry='2.4' fill='none' stroke='#1e95ef' stroke-width='1.1' transform='rotate(60)'/><ellipse rx='6.5' ry='2.4' fill='none' stroke='#1e95ef' stroke-width='1.1' transform='rotate(-60)'/><circle r='1.3' fill='#1e95ef'/></g></svg>
<svg style='left:0;top:0' width='1862' height='100'><g fill='none' stroke='#cccccc' stroke-width='1.1'><path d='M1755.2 77.2 L1764.8 83.4 L1755.2 89.6 Z' stroke-linejoin='round'/><circle cx='1781.6' cy='78.6' r='2.1'/><circle cx='1790.5' cy='88.5' r='2.1'/><path d='M1781.6 80.7 V85.5 C1781.6 87.5 1783 88.5 1786.3 88.5 M1784.6 86.8 L1786.3 88.5 L1784.6 90.2'/><path d='M1790.5 86.4 V81.3 C1790.5 79.3 1789 78.3 1785.7 78.3 M1787.4 76.6 L1785.7 78.3 L1787.4 80'/><rect x='1806.6' y='76.7' width='11.7' height='11.7'/><path d='M1806.6 82.5 H1818.3'/></g><g fill='#cccccc'><circle cx='1833' cy='83' r='0.9'/><circle cx='1838' cy='83' r='0.9'/><circle cx='1843' cy='83' r='0.9'/></g></svg>
<div class='t' style='left:362.58px;top:105.30px;font-size:13px;font-weight:400;font-family:"Liberation Sans", sans-serif;color:#a9a9a9;transform:scaleX(1.0416);transform-origin:0 0;'>appvolume</div>
<div class='t' style='left:444.39px;top:105.30px;font-size:13px;font-weight:400;font-family:"Liberation Sans", sans-serif;color:#a9a9a9;transform:scaleX(1.0133);transform-origin:0 0;'>app</div>
<div class='t' style='left:482.38px;top:105.30px;font-size:13px;font-weight:400;font-family:"Liberation Sans", sans-serif;color:#a9a9a9;transform:scaleX(1.0361);transform-origin:0 0;'>components</div>
<div class='t' style='left:594.30px;top:105.30px;font-size:13px;font-weight:400;font-family:"Liberation Sans", sans-serif;color:#a9a9a9;transform:scaleX(1.0179);transform-origin:0 0;'>AddProductCard.tsx</div>
<div class='t' style='left:748.80px;top:105.30px;font-size:13px;font-weight:400;font-family:"Liberation Sans", sans-serif;color:#a9a9a9;transform:scaleX(1.0152);transform-origin:0 0;'>AddProductCard</div>
<svg style='left:0;top:0' width='1000' height='122'><path d='M433.79999999999995 106.3 L439.0 110.9 L433.79999999999995 115.5' fill='none' stroke='#a9a9a9' stroke-width='1.05'/><path d='M472.0 106.3 L477.20000000000005 110.9 L472.0 115.5' fill='none' stroke='#a9a9a9' stroke-width='1.05'/><path d='M560.5 106.3 L565.7 110.9 L560.5 115.5' fill='none' stroke='#a9a9a9' stroke-width='1.05'/><path d='M718.6 106.3 L723.8000000000001 110.9 L718.6 115.5' fill='none' stroke='#a9a9a9' stroke-width='1.05'/><g transform='translate(580 111.2)'><ellipse rx='6.5' ry='2.4' fill='none' stroke='#1e95ef' stroke-width='1.1'/><ellipse rx='6.5' ry='2.4' fill='none' stroke='#1e95ef' stroke-width='1.1' transform='rotate(60)'/><ellipse rx='6.5' ry='2.4' fill='none' stroke='#1e95ef' stroke-width='1.1' transform='rotate(-60)'/><circle r='1.3' fill='#1e95ef'/></g><g fill='none' stroke='#75beff' stroke-width='1.05'><path d='M732.6 107.5 H730.5 V115.5 H732.6 M741.3 107.5 H743.4 V115.5 H741.3'/><path d='M733.7 110.6 L737.8 108.6 L740.3 110 V112.6 L736.2 114.6 L733.7 113.2 Z M733.7 110.6 L736.2 112 L740.3 110 M736.2 112 V114.6'/></g></svg>
<div class='t' style='left:416.50px;top:123.89px;font-size:12.3px;font-weight:400;font-family:"Liberation Sans", sans-serif;color:#999999;transform:scaleX(1.0025);transform-origin:0 0;'>Edit file using CodeParrot (ctrl+h)</div>
<div class='a' style='left:417px;top:290px;width:1310px;height:19px;border-top:2px solid #282828;border-bottom:2px solid #282828'></div>
<div class='a' style='left:417px;top:233px;width:1px;height:133px;background:#404040'></div>
<div class='a' style='left:451px;top:252px;width:1px;height:95px;background:#404040'></div>
<div class='a' style='left:484px;top:271px;width:1px;height:57px;background:#404040'></div>
<div class='a' style='left:518px;top:290px;width:1px;height:19px;background:#707070'></div>
<div class='a' style='left:501.1px;top:233px;width:9px;height:19px;border:1px solid #888888;background:rgba(0,100,0,.1)'></div>
<div class='a' style='left:450.5px;top:347px;width:9px;height:19px;border:1px solid #888888;background:rgba(0,100,0,.1)'></div>
<div class='t' style='left:382.6px;top:141.36px;font-family:"Liberation Mono", monospace;font-size:14px;color:#6e7681'>1</div>
<div class='t' style='left:417px;top:141.36px;font-family:"Liberation Mono", monospace;font-size:14px;letter-spacing:0.03px'><span style='color:#c586c0'>import</span><span style='color:#d4d4d4'> </span><span style='color:#9cdcfe'>Image</span><span style='color:#d4d4d4'> </span><span style='color:#c586c0'>from</span><span style='color:#d4d4d4'> </span><span style='color:#ce9178'>&quot;next/image&quot;</span></div>
<div class='t' style='left:382.6px;top:160.36px;font-family:"Liberation Mono", monospace;font-size:14px;color:#6e7681'>2</div>
<div class='t' style='left:417px;top:160.36px;font-family:"Liberation Mono", monospace;font-size:14px;letter-spacing:0.03px'><span style='color:#c586c0'>import</span><span style='color:#d4d4d4'> </span><span style='color:#9cdcfe'>img</span><span style='color:#d4d4d4'> </span><span style='color:#c586c0'>from</span><span style='color:#d4d4d4'> </span><span style='color:#ce9178'>&quot;../../public/assets/images/jsw.png&quot;</span><span style='color:#d4d4d4'>;</span><span style='color:#d4d4d4'> </span><span style='color:#6a9955'>// Ensure this is correctly imported</span></div>
<div class='t' style='left:382.6px;top:179.36px;font-family:"Liberation Mono", monospace;font-size:14px;color:#6e7681'>3</div>
<div class='t' style='left:382.6px;top:198.36px;font-family:"Liberation Mono", monospace;font-size:14px;color:#6e7681'>4</div>
<div class='t' style='left:382.6px;top:217.36px;font-family:"Liberation Mono", monospace;font-size:14px;color:#6e7681'>5</div>
<div class='t' style='left:417px;top:217.36px;font-family:"Liberation Mono", monospace;font-size:14px;letter-spacing:0.03px'><span style='color:#569cd6'>const</span><span style='color:#d4d4d4'> </span><span style='color:#4fc1ff'>AddProductCard</span><span style='color:#d4d4d4'>:</span><span style='color:#4ec9b0'>React</span><span style='color:#d4d4d4'>.</span><span style='color:#4ec9b0'>FC</span><span style='color:#d4d4d4'>=</span><span style='color:#ffd700'>()</span><span style='color:#569cd6'>=&gt;</span><span style='color:#ffd700'>{</span></div>
<div class='t' style='left:382.6px;top:236.36px;font-family:"Liberation Mono", monospace;font-size:14px;color:#6e7681'>6</div>
<div class='t' style='left:417px;top:236.36px;font-family:"Liberation Mono", monospace;font-size:14px;letter-spacing:0.03px'><span style='color:#d4d4d4'>    </span><span style='color:#c586c0'>return</span><span style='color:#da70d6'>(</span></div>
<div class='t' style='left:382.6px;top:255.36px;font-family:"Liberation Mono", monospace;font-size:14px;color:#6e7681'>7</div>
<div class='t' style='left:417px;top:255.36px;font-family:"Liberation Mono", monospace;font-size:14px;letter-spacing:0.03px'><span style='color:#d4d4d4'>        </span><span style='color:#808080'>&lt;</span><span style='color:#569cd6'>div</span><span style='color:#808080'>&gt;</span></div>
<div class='t' style='left:382.6px;top:274.36px;font-family:"Liberation Mono", monospace;font-size:14px;color:#6e7681'>8</div>
<div class='t' style='left:417px;top:274.36px;font-family:"Liberation Mono", monospace;font-size:14px;letter-spacing:0.03px'><span style='color:#d4d4d4'>            </span><span style='color:#808080'>&lt;</span><span style='color:#569cd6'>div</span><span style='color:#d4d4d4'> </span><span style='color:#9cdcfe'>className</span><span style='color:#d4d4d4'>=</span><span style='color:#ce9178'>&quot;w-[310px] h-[190px]&quot;</span><span style='color:#d4d4d4'> </span><span style='color:#808080'>&gt;</span></div>
<div class='t' style='left:382.6px;top:293.36px;font-family:"Liberation Mono", monospace;font-size:14px;color:#cccccc'>9</div>
<div class='t' style='left:417px;top:293.36px;font-family:"Liberation Mono", monospace;font-size:14px;letter-spacing:0.03px'><span style='color:#d4d4d4'>                </span><span style='color:#808080'>&lt;</span><span style='color:#4ec9b0'>Image</span><span style='color:#d4d4d4'> </span><span style='color:#9cdcfe'>src</span><span style='color:#d4d4d4'>=</span><span style='color:#569cd6'>{</span><span style='color:#9cdcfe'>img</span><span style='color:#569cd6'>}</span><span style='color:#d4d4d4'> </span><span style='color:#9cdcfe'>fill</span><span style='color:#d4d4d4'> </span><span style='color:#9cdcfe'>alt</span><span style='color:#d4d4d4'>=</span><span style='color:#ce9178'>&quot;productimg&quot;</span><span style='color:#808080'>/&gt;</span></div>
<div class='t' style='left:374.2px;top:312.36px;font-family:"Liberation Mono", monospace;font-size:14px;color:#6e7681'>10</div>
<div class='t' style='left:417px;top:312.36px;font-family:"Liberation Mono", monospace;font-size:14px;letter-spacing:0.03px'><span style='color:#d4d4d4'>            </span><span style='color:#808080'>&lt;/</span><span style='color:#569cd6'>div</span><span style='color:#808080'>&gt;</span></div>
<div class='t' style='left:374.2px;top:331.36px;font-family:"Liberation Mono", monospace;font-size:14px;color:#6e7681'>11</div>
<div class='t' style='left:417px;top:331.36px;font-family:"Liberation Mono", monospace;font-size:14px;letter-spacing:0.03px'><span style='color:#d4d4d4'>        </span><span style='color:#808080'>&lt;/</span><span style='color:#569cd6'>div</span><span style='color:#808080'>&gt;</span></div>
<div class='t' style='left:374.2px;top:350.36px;font-family:"Liberation Mono", monospace;font-size:14px;color:#6e7681'>12</div>
<div class='t' style='left:417px;top:350.36px;font-family:"Liberation Mono", monospace;font-size:14px;letter-spacing:0.03px'><span style='color:#d4d4d4'>    </span><span style='color:#da70d6'>)</span></div>
<div class='t' style='left:374.2px;top:369.36px;font-family:"Liberation Mono", monospace;font-size:14px;color:#6e7681'>13</div>
<div class='t' style='left:417px;top:369.36px;font-family:"Liberation Mono", monospace;font-size:14px;letter-spacing:0.03px'><span style='color:#ffd700'>}</span></div>
<div class='a' style='left:1735px;top:122px;width:800px;height:260px;font-family:"Liberation Mono", monospace;font-size:14px;font-weight:bold;transform:scale(0.1186,0.1053);transform-origin:0 0;opacity:.9'><div style='position:absolute;left:0;top:0px;height:19px;line-height:19px;white-space:pre'><span style='color:#c586c0'>import</span><span style='color:#d4d4d4'> </span><span style='color:#9cdcfe'>Image</span><span style='color:#d4d4d4'> </span><span style='color:#c586c0'>from</span><span style='color:#d4d4d4'> </span><span style='color:#ce9178'>&quot;next/image&quot;</span></div><div style='position:absolute;left:0;top:19px;height:19px;line-height:19px;white-space:pre'><span style='color:#c586c0'>import</span><span style='color:#d4d4d4'> </span><span style='color:#9cdcfe'>img</span><span style='color:#d4d4d4'> </span><span style='color:#c586c0'>from</span><span style='color:#d4d4d4'> </span><span style='color:#ce9178'>&quot;../../public/assets/images/jsw.png&quot;</span><span style='color:#d4d4d4'>;</span><span style='color:#d4d4d4'> </span><span style='color:#6a9955'>// Ensure this is correctly imported</span></div><div style='position:absolute;left:0;top:76px;height:19px;line-height:19px;white-space:pre'><span style='color:#569cd6'>const</span><span style='color:#d4d4d4'> </span><span style='color:#4fc1ff'>AddProductCard</span><span style='color:#d4d4d4'>:</span><span style='color:#4ec9b0'>React</span><span style='color:#d4d4d4'>.</span><span style='color:#4ec9b0'>FC</span><span style='color:#d4d4d4'>=</span><span style='color:#ffd700'>()</span><span style='color:#569cd6'>=&gt;</span><span style='color:#ffd700'>{</span></div><div style='position:absolute;left:0;top:95px;height:19px;line-height:19px;white-space:pre'><span style='color:#d4d4d4'>    </span><span style='color:#c586c0'>return</span><span style='color:#da70d6'>(</span></div><div style='position:absolute;left:0;top:114px;height:19px;line-height:19px;white-space:pre'><span style='color:#d4d4d4'>        </span><span style='color:#808080'>&lt;</span><span style='color:#569cd6'>div</span><span style='color:#808080'>&gt;</span></div><div style='position:absolute;left:0;top:133px;height:19px;line-height:19px;white-space:pre'><span style='color:#d4d4d4'>            </span><span style='color:#808080'>&lt;</span><span style='color:#569cd6'>div</span><span style='color:#d4d4d4'> </span><span style='color:#9cdcfe'>className</span><span style='color:#d4d4d4'>=</span><span style='color:#ce9178'>&quot;w-[310px] h-[190px]&quot;</span><span style='color:#d4d4d4'> </span><span style='color:#808080'>&gt;</span></div><div style='position:absolute;left:0;top:152px;height:19px;line-height:19px;white-space:pre'><span style='color:#d4d4d4'>                </span><span style='color:#808080'>&lt;</span><span style='color:#4ec9b0'>Image</span><span style='color:#d4d4d4'> </span><span style='color:#9cdcfe'>src</span><span style='color:#d4d4d4'>=</span><span style='color:#569cd6'>{</span><span style='color:#9cdcfe'>img</span><span style='color:#569cd6'>}</span><span style='color:#d4d4d4'> </span><span style='color:#9cdcfe'>fill</span><span style='color:#d4d4d4'> </span><span style='color:#9cdcfe'>alt</span><span style='color:#d4d4d4'>=</span><span style='color:#ce9178'>&quot;productimg&quot;</span><span style='color:#808080'>/&gt;</span></div><div style='position:absolute;left:0;top:171px;height:19px;line-height:19px;white-space:pre'><span style='color:#d4d4d4'>            </span><span style='color:#808080'>&lt;/</span><span style='color:#569cd6'>div</span><span style='color:#808080'>&gt;</span></div><div style='position:absolute;left:0;top:190px;height:19px;line-height:19px;white-space:pre'><span style='color:#d4d4d4'>        </span><span style='color:#808080'>&lt;/</span><span style='color:#569cd6'>div</span><span style='color:#808080'>&gt;</span></div><div style='position:absolute;left:0;top:209px;height:19px;line-height:19px;white-space:pre'><span style='color:#d4d4d4'>    </span><span style='color:#da70d6'>)</span></div><div style='position:absolute;left:0;top:228px;height:19px;line-height:19px;white-space:pre'><span style='color:#ffd700'>}</span></div></div>
<div class='a' style='left:1847px;top:122px;width:1px;height:824px;background:#252525'></div>
<div class='a' style='left:1847px;top:121px;width:14px;height:1px;background:#181818'></div>
<div class='a' style='left:1847px;top:122px;width:14px;height:635px;background:#464646'></div>
<div class='a' style='left:1848px;top:250px;width:13px;height:2px;background:#a0a0a0'></div>
<div class='a' style='left:347px;top:946px;width:1515px;height:86px;background:#181818;border-top:1px solid #2b2b2b'></div>
<div class='t' style='left:366.40px;top:958.57px;font-size:11.5px;font-weight:400;font-family:"Liberation Sans", sans-serif;color:#9d9d9d;transform:scaleX(0.9026);transform-origin:0 0;'>PROBLEMS</div>
<div class='t' style='left:447.45px;top:958.57px;font-size:11.5px;font-weight:400;font-family:"Liberation Sans", sans-serif;color:#9d9d9d;transform:scaleX(0.9097);transform-origin:0 0;'>OUTPUT</div>
<div class='t' style='left:513.72px;top:958.57px;font-size:11.5px;font-weight:400;font-family:"Liberation Sans", sans-serif;color:#9d9d9d;transform:scaleX(0.8839);transform-origin:0 0;'>DEBUG CONSOLE</div>
<div class='t' style='left:626.77px;top:958.57px;font-size:11.5px;font-weight:400;font-family:"Liberation Sans", sans-serif;color:#e7e7e7;transform:scaleX(0.9217);transform-origin:0 0;'>TERMINAL</div>
<div class='t' style='left:703.10px;top:958.57px;font-size:11.5px;font-weight:400;font-family:"Liberation Sans", sans-serif;color:#9d9d9d;transform:scaleX(0.8977);transform-origin:0 0;'>PORTS</div>
<div class='a' style='left:626px;top:975px;width:56px;height:1px;background:#0078d4'></div>
<div class='a' style='left:367px;top:981px;width:24px;height:17px;background:#cccccc'></div>
<div class='a' style='left:391px;top:981px;width:144px;height:17px;background:#3b8eea'></div>
<div class='t' style='left:367px;top:984.08px;font-family:"Liberation Mono", monospace;font-size:13.33px;color:#1f1f1f'> *  History restored </div>
<div class='t' style='left:367px;top:1018.08px;font-family:"Liberation Mono", monospace;font-size:13.33px;font-weight:bold'><span style='color:#23d18b'>enspirit@enspirit-H110M-H</span><span style='color:#cccccc;font-weight:normal'>:</span><span style='color:#3b8eea'>~/Documents/market_place_latest/marketplace_web (1)/marketplace_web/appvolume</span><span style='color:#cccccc;font-weight:normal'>$</span></div>
<svg style='left:0;top:0' width='1862' height='1055'><circle cx='358.3' cy='1023.2' r='3.6' fill='none' stroke='#8b8b8b' stroke-width='1.2'/></svg>
<div class='a' style='left:1848px;top:1026px;width:6px;height:6px;background:#434343'></div>
<div class='a' style='left:1398px;top:934px;width:451px;height:85px;background:#1f1f1f;border:1px solid #2b2b2b;border-radius:4px;box-shadow:0 0 8px rgba(0,0,0,.6)'></div>
<svg style='left:0;top:0' width='1862' height='1055'><circle cx='1416.6' cy='956.6' r='6.8' fill='none' stroke='#3794ff' stroke-width='1.2'/><circle cx='1416.6' cy='953.4' r='0.9' fill='#3794ff'/><line x1='1416.6' y1='955.5' x2='1416.6' y2='960.5' stroke='#3794ff' stroke-width='1.3'/><path d='M1824.5 951.5 L1833.5 960.5 M1833.5 951.5 L1824.5 960.5' stroke='#cccccc' stroke-width='1.3'/></svg>
<div class='t' style='left:1429.37px;top:950.30px;font-size:13px;font-weight:400;font-family:"Liberation Sans", sans-serif;color:#cccccc;transform:scaleX(1.0058);transform-origin:0 0;'>Do you mind taking a quick feedback survey?</div>
<div class='a' style='left:1500px;top:977px;width:86px;height:28px;background:#0078d4;border:1px solid #0078d4;border-radius:2px'></div>
<div class='t' style='left:1510.77px;top:984.30px;font-size:13px;font-weight:400;font-family:"Liberation Sans", sans-serif;color:#ffffff;transform:scaleX(0.9053);transform-origin:0 0;'>Take Survey</div>
<div class='a' style='left:1596px;top:977px;width:115px;height:28px;background:#313131;border:1px solid #3c3c3c;border-radius:2px'></div>
<div class='t' style='left:1606.44px;top:984.30px;font-size:13px;font-weight:400;font-family:"Liberation Sans", sans-serif;color:#cccccc;transform:scaleX(0.9403);transform-origin:0 0;'>Remind Me Later</div>
<div class='a' style='left:1721px;top:977px;width:118px;height:28px;background:#313131;border:1px solid #3c3c3c;border-radius:2px'></div>
<div class='t' style='left:1731.43px;top:984.30px;font-size:13px;font-weight:400;font-family:"Liberation Sans", sans-serif;color:#cccccc;transform:scaleX(0.9476);transform-origin:0 0;'>Don&#x27;t Show Again</div>
<div class='a' style='left:0;top:1032px;width:1862px;height:23px;background:#181818;border-top:1px solid #2b2b2b'></div>
<div class='a' style='left:1px;top:1033px;width:34px;height:22px;background:#0078d4'></div>
<svg style='left:0;top:0' width='1862' height='1055'><path d='M21.9 1037.2 L18.4 1040.9 L21.9 1044.5 M14.1 1040.5 L17.8 1044.4 L14.1 1048.3' fill='none' stroke='#fff' stroke-width='1.2'/><g fill='none' stroke='#cccccc' stroke-width='1.1'><circle cx='44.5' cy='1038' r='1.9'/><circle cx='44.5' cy='1048' r='1.9'/><circle cx='51' cy='1040.5' r='1.9'/><path d='M44.5 1040 V1046 M51 1042.5 C51 1045 45 1044.5 44.8 1046.2'/></g><g fill='none' stroke='#cccccc' stroke-width='1.1'><path d='M196.5 1046.5 H195 A2.7 2.7 0 0 1 194.6 1041.2 A3.7 3.7 0 0 1 201.8 1040.6 A2.9 2.9 0 0 1 202.6 1046.5 H201.5'/><path d='M198.8 1048.5 V1042.8 M197 1044.6 L198.8 1042.8 L200.6 1044.6'/></g><g fill='none' stroke='#cccccc' stroke-width='1.1'><circle cx='225.9' cy='1043.1' r='5.3'/><path d='M223.7 1040.9 L228.1 1045.3 M228.1 1040.9 L223.7 1045.3'/></g><g fill='none' stroke='#cccccc' stroke-width='1.1'><path d='M252.5 1037.5 L258.3 1048 H246.7 Z' stroke-linejoin='round'/><path d='M252.5 1041 V1044.5 M252.5 1045.6 V1046.5'/></g><g fill='none' stroke='#cccccc' stroke-width='1'><circle cx='292.9' cy='1040.8' r='1.3'/><path d='M290.4 1038.3 A3.5 3.5 0 0 0 290.4 1043.5 M295.4 1038.3 A3.5 3.5 0 0 1 295.4 1043.5 M288.6 1036.8 A6 6 0 0 0 288.6 1045 M297.2 1036.8 A6 6 0 0 1 297.2 1045 M292.9 1042.2 L290.2 1048.8 M292.9 1042.2 L295.6 1048.8 M291 1046.5 H294.8'/></g><g fill='none' stroke='#cccccc' stroke-width='1.05'><path d='M1575 1037.5 C1573.3 1037.5 1574 1041.5 1572.3 1042.3 C1574 1043 1573.3 1047 1575 1047'/><circle cx='1580.6' cy='1046.8' r='1.7'/><path d='M1578.8 1037.5 C1580.5 1037.5 1580 1041 1581.2 1042'/></g><g fill='none' stroke='#cccccc' stroke-width='1.1'><circle cx='1691.3' cy='1042' r='1.4'/><path d='M1689 1044.3 A3.2 3.2 0 1 1 1693.6 1044.3 M1687.5 1045.8 A5.3 5.3 0 1 1 1695.1 1045.8 M1691.3 1043.4 V1049'/></g><g fill='none' stroke='#cccccc' stroke-width='1.1'><path d='M1757 1043 L1759.5 1047 L1765.5 1038 M1761 1047 L1768.5 1039'/></g><g fill='none' stroke='#cccccc' stroke-width='1.1'><path d='M1834 1047 H1845 L1843.5 1045 V1041.5 A4 4 0 0 0 1835.5 1041.5 V1045 Z M1838 1049 H1841'/></g><circle cx='1844' cy='1038' r='2.6' fill='#cccccc'/></svg>
<div class='t' style='left:57.41px;top:1035.72px;font-size:12.5px;font-weight:400;font-family:"Liberation Sans", sans-serif;color:#cccccc;transform:scaleX(1.0448);transform-origin:0 0;'>sprint4/google-button*</div>
<div class='t' style='left:235.80px;top:1036.72px;font-size:12.5px;font-weight:400;font-family:"Liberation Sans", sans-serif;color:#cccccc;'>0</div>
<div class='t' style='left:261.77px;top:1036.72px;font-size:12.5px;font-weight:400;font-family:"Liberation Sans", sans-serif;color:#cccccc;transform:scaleX(1.0667);transform-origin:0 0;'>0</div>
<div class='t' style='left:301.46px;top:1036.72px;font-size:12.5px;font-weight:400;font-family:"Liberation Sans", sans-serif;color:#cccccc;transform:scaleX(1.0833);transform-origin:0 0;'>0</div>
<div class='t' style='left:1350.37px;top:1036.72px;font-size:12.5px;font-weight:400;font-family:"Liberation Sans", sans-serif;color:#cccccc;transform:scaleX(0.9260);transform-origin:0 0;'>Ln 9, Col 55</div>
<div class='t' style='left:1428.93px;top:1036.72px;font-size:12.5px;font-weight:400;font-family:"Liberation Sans", sans-serif;color:#cccccc;transform:scaleX(0.9043);transform-origin:0 0;'>Spaces: 4</div>
<div class='t' style='left:1494.28px;top:1036.72px;font-size:12.5px;font-weight:400;font-family:"Liberation Sans", sans-serif;color:#cccccc;transform:scaleX(0.9240);transform-origin:0 0;'>UTF-8</div>
<div class='t' style='left:1541.85px;top:1036.72px;font-size:12.5px;font-weight:400;font-family:"Liberation Sans", sans-serif;color:#cccccc;transform:scaleX(0.9524);transform-origin:0 0;'>LF</div>
<div class='t' style='left:1590.06px;top:1036.72px;font-size:12.5px;font-weight:400;font-family:"Liberation Sans", sans-serif;color:#cccccc;transform:scaleX(0.9402);transform-origin:0 0;'>TypeScript JSX</div>
<div class='t' style='left:1699.91px;top:1036.72px;font-size:12.5px;font-weight:400;font-family:"Liberation Sans", sans-serif;color:#cccccc;transform:scaleX(0.9385);transform-origin:0 0;'>Go Live</div>
<div class='t' style='left:1772.22px;top:1036.72px;font-size:12.5px;font-weight:400;font-family:"Liberation Sans", sans-serif;color:#cccccc;transform:scaleX(1.0760);transform-origin:0 0;'>Prettier</div>
<div class='a' style='left:0;top:0;width:1862px;height:1px;background:#000'></div>
<div class='a' style='left:1px;top:1px;width:1860px;height:1px;background:#2f2f2f'></div>
<div class='a' style='left:0;top:0;width:1px;height:1055px;background:#000'></div>
<div class='a' style='left:1861px;top:0;width:1px;height:1055px;background:#000'></div>
<div class='a' style='left:0;top:1054px;width:1862px;height:1px;background:#000'></div>
</body></html>
